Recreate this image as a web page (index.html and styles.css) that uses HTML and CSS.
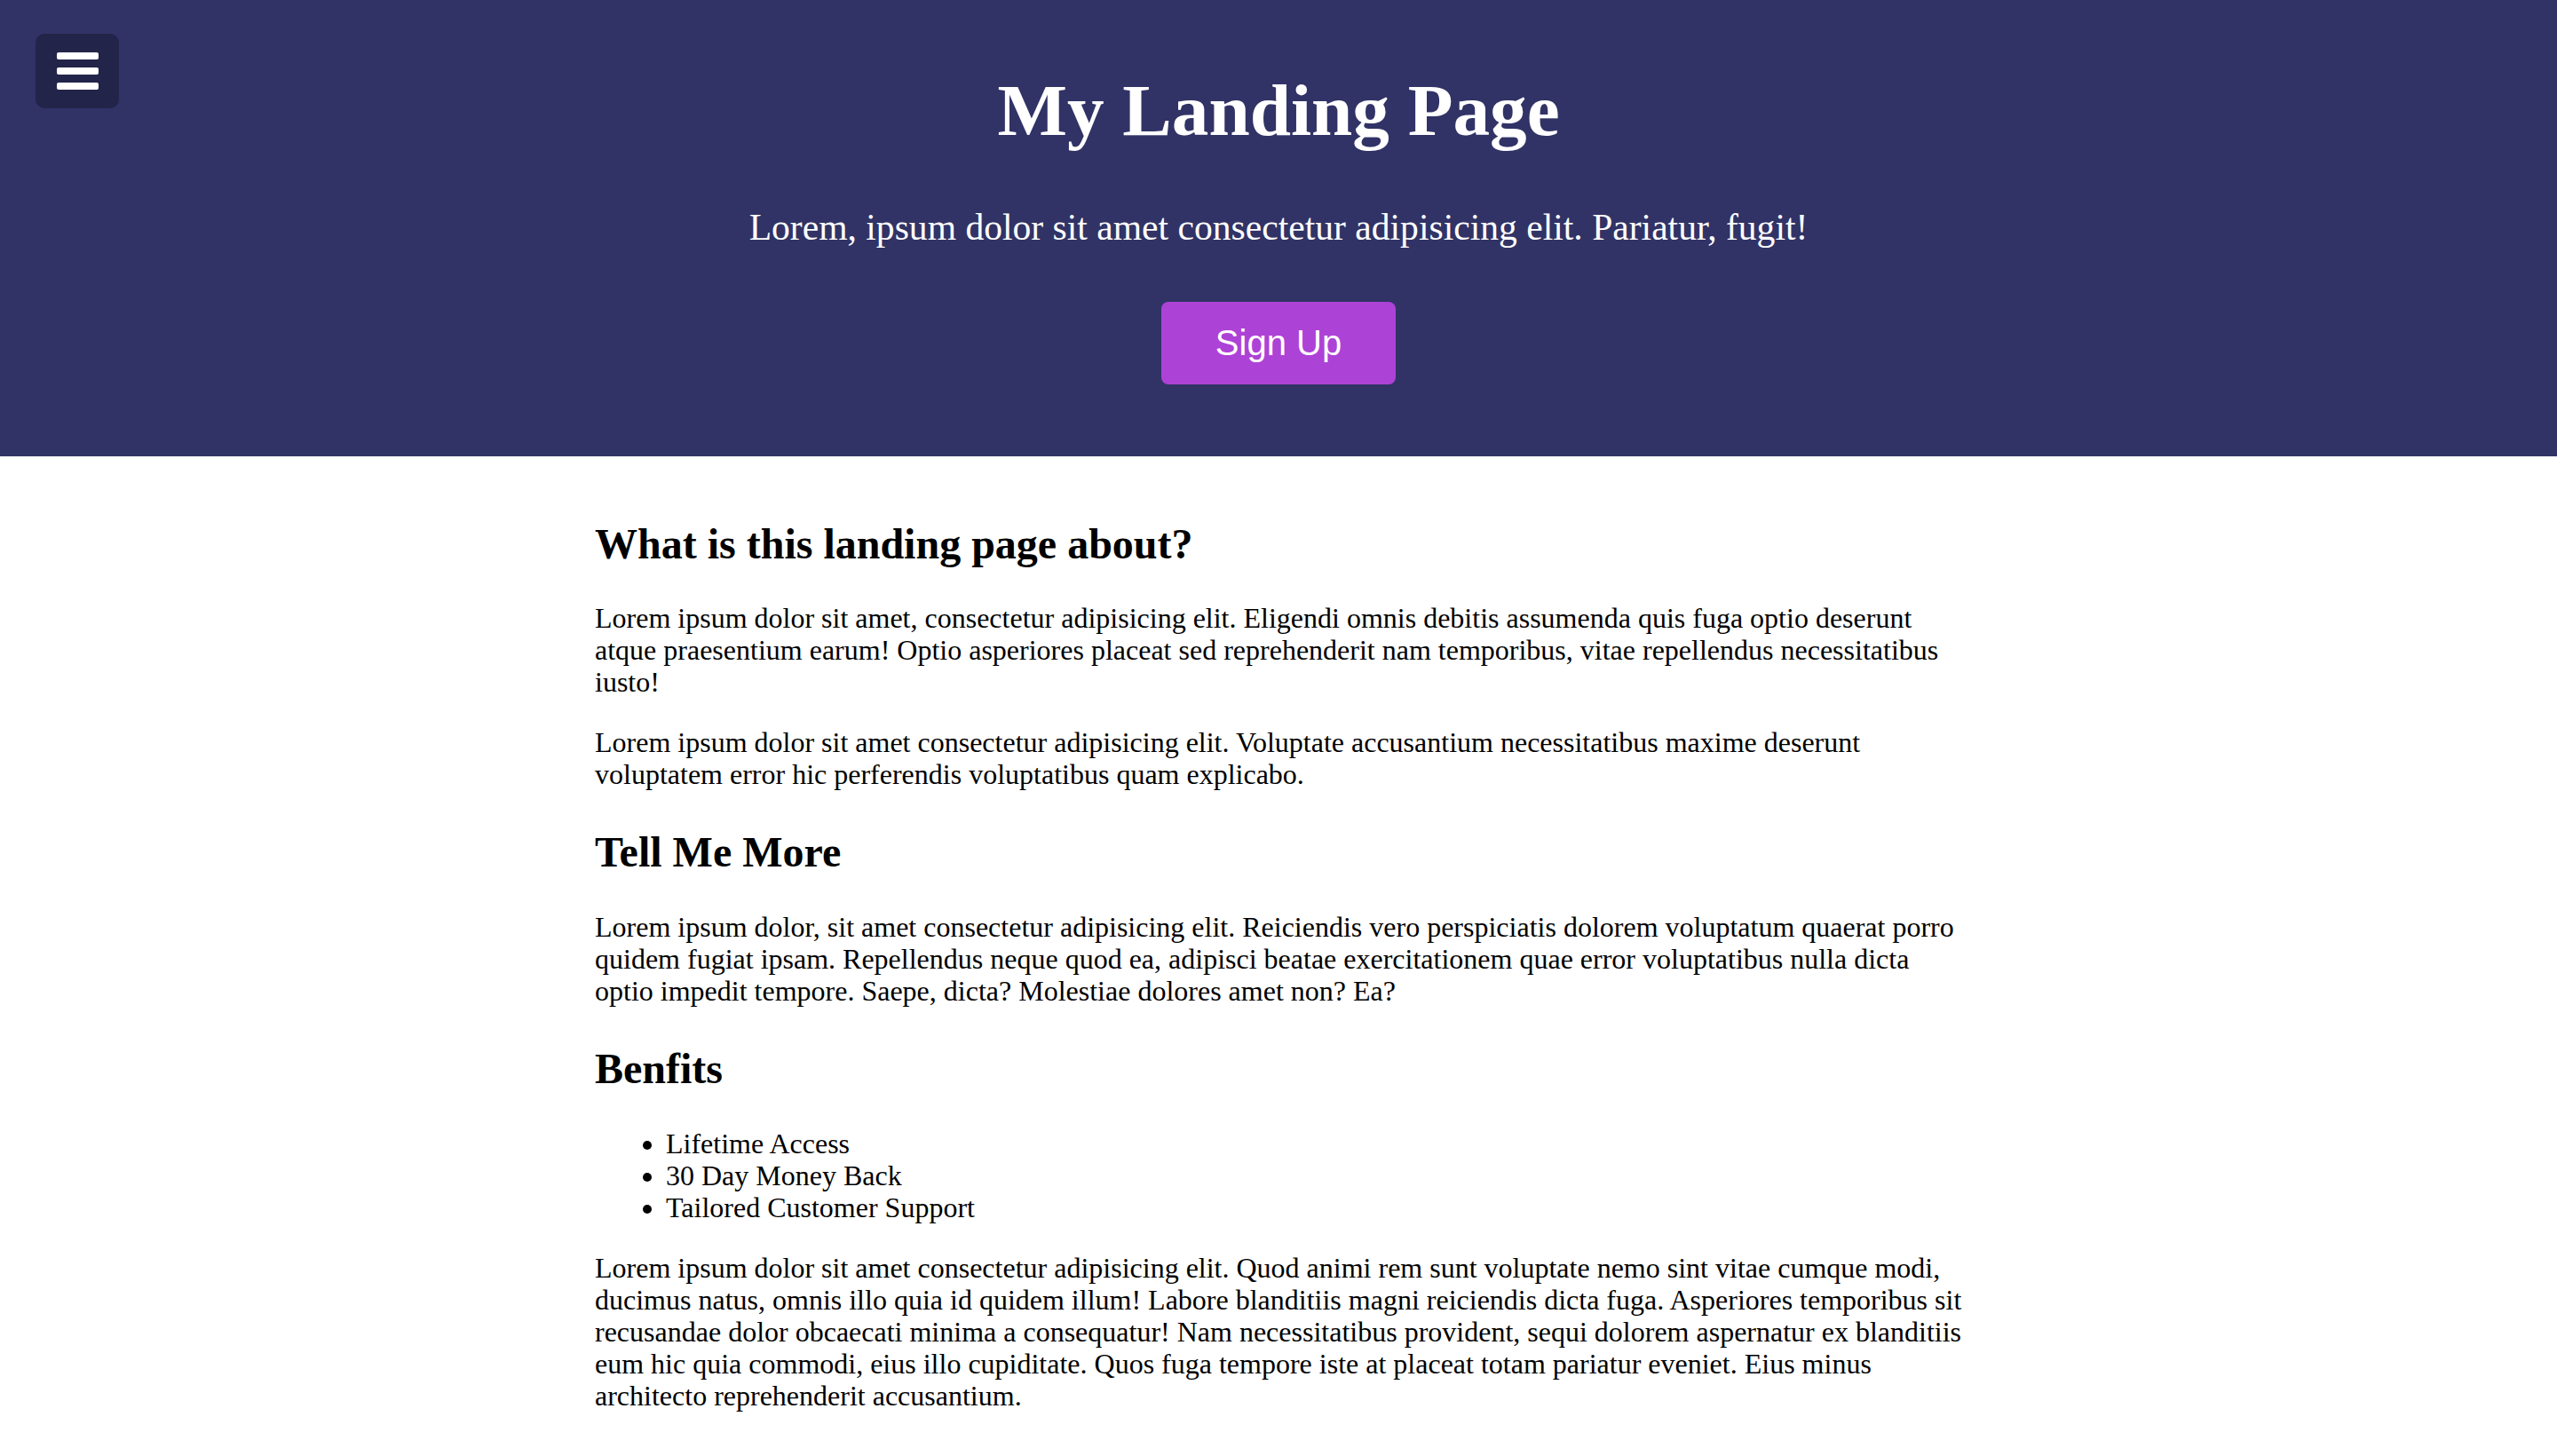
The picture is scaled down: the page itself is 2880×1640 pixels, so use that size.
FILE: index.html
```html
<!DOCTYPE html>
<html lang="en">
<head>
<meta charset="utf-8">
<title>My Landing Page</title>
<link rel="stylesheet" href="styles.css">
</head>
<body>
<header class="hero">
  <button class="menu-btn" aria-label="Menu">
    <span class="bar"></span>
    <span class="bar"></span>
    <span class="bar"></span>
  </button>
  <h1 class="hero-title">My Landing Page</h1>
  <p class="hero-sub">Lorem, ipsum dolor sit amet consectetur adipisicing elit. Pariatur, fugit!</p>
  <a class="cta" href="#">Sign Up</a>
</header>
<main class="content">
  <h2>What is this landing page about?</h2>
  <p>Lorem ipsum dolor sit amet, consectetur adipisicing elit. Eligendi omnis debitis assumenda quis fuga optio deserunt atque praesentium earum! Optio asperiores placeat sed reprehenderit nam temporibus, vitae repellendus necessitatibus iusto!</p>
  <p>Lorem ipsum dolor sit amet consectetur adipisicing elit. Voluptate accusantium necessitatibus maxime deserunt voluptatem error hic perferendis voluptatibus quam explicabo.</p>
  <h2>Tell Me More</h2>
  <p>Lorem ipsum dolor, sit amet consectetur adipisicing elit. Reiciendis vero perspiciatis dolorem voluptatum quaerat porro quidem fugiat ipsam. Repellendus neque quod ea, adipisci beatae exercitationem quae error voluptatibus nulla dicta optio impedit tempore. Saepe, dicta? Molestiae dolores amet non? Ea?</p>
  <h2>Benfits</h2>
  <ul>
    <li>Lifetime Access</li>
    <li>30 Day Money Back</li>
    <li>Tailored Customer Support</li>
  </ul>
  <p>Lorem ipsum dolor sit amet consectetur adipisicing elit. Quod animi rem sunt voluptate nemo sint vitae cumque modi, ducimus natus, omnis illo quia id quidem illum! Labore blanditiis magni reiciendis dicta fuga. Asperiores temporibus sit recusandae dolor obcaecati minima a consequatur! Nam necessitatibus provident, sequi dolorem aspernatur ex blanditiis eum hic quia commodi, eius illo cupiditate. Quos fuga tempore iste at placeat totam pariatur eveniet. Eius minus architecto reprehenderit accusantium.</p>
</main>
</body>
</html>
```
FILE: styles.css
```css
html, body {
  margin: 0;
  padding: 0;
}
body {
  font-family: "Liberation Serif", "Times New Roman", serif;
  font-size: 32px;
  line-height: 1.125;
  color: #000;
  background: #fff;
}
.hero {
  position: relative;
  background: #313366;
  color: #fff;
  text-align: center;
  padding: 78px 0 81px;
  display: flex;
  flex-direction: column;
  align-items: center;
}
.menu-btn {
  position: absolute;
  top: 38px;
  left: 40px;
  width: 94px;
  height: 84px;
  border: none;
  border-radius: 10px;
  background: #222449;
  padding: 0;
  display: flex;
  flex-direction: column;
  align-items: center;
  justify-content: center;
  gap: 9px;
  cursor: pointer;
}
.bar {
  display: block;
  width: 47px;
  height: 8px;
  border-radius: 2px;
  background: #fff;
}
.hero-title {
  margin: 0;
  font-size: 83.2px;
  font-weight: bold;
}
.hero-sub {
  margin: 61px 0 0;
  font-size: 41.6px;
}
.cta {
  margin-top: 60.6px;
  display: inline-block;
  background: #ad42d6;
  color: #fff;
  text-decoration: none;
  font-family: "Liberation Sans", Arial, sans-serif;
  font-size: 40px;
  line-height: 46px;
  padding: 23px 61px 24px;
  border-radius: 8px;
}
.content {
  width: 1540px;
  margin: 0 auto;
  padding-top: 28.6px;
}
.content h2 {
  font-size: 48px;
  margin: 43px 0 38.8px;
}
.content p {
  margin: 32px 0;
}
.content ul {
  margin: 32px 0;
  padding-left: 80px;
}
```
